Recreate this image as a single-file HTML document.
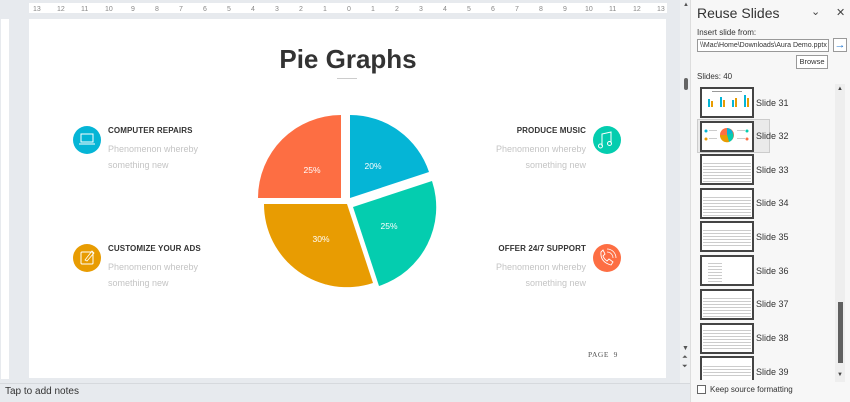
<!DOCTYPE html>
<html><head><meta charset="utf-8"><style>
*{margin:0;padding:0;box-sizing:border-box}
body{width:850px;height:402px;overflow:hidden;background:#e7eaee;font-family:"Liberation Sans",sans-serif;position:relative}
.abs{position:absolute}
.t{font-size:8px;font-weight:bold;color:#333;letter-spacing:.1px}
.d{font-size:9px;color:#c4c4c4;line-height:16px}
.th{position:absolute;left:700px;width:54px;height:31px;background:#fff;border:2px solid #444}
.tx{position:absolute;left:703px;width:48px;height:22px;background:repeating-linear-gradient(#fff 0,#fff 2px,#ccc 2px,#ccc 3px)}
.sl{position:absolute;left:756px;font-size:9px;color:#333}
</style></head><body>
<div class="abs" style="left:29px;top:3px;width:638px;height:10px;background:#fff"></div>
<svg width="638" height="10" style="position:absolute;left:29px;top:3px">
<g fill="#888" font-family="Liberation Sans" font-size="7">
<text x="4" y="8">13</text><text x="28" y="8">12</text><text x="52" y="8">11</text><text x="76" y="8">10</text><text x="102" y="8">9</text><text x="126" y="8">8</text><text x="150" y="8">7</text><text x="174" y="8">6</text><text x="198" y="8">5</text><text x="222" y="8">4</text><text x="246" y="8">3</text><text x="270" y="8">2</text><text x="294" y="8">1</text><text x="318" y="8">0</text><text x="342" y="8">1</text><text x="366" y="8">2</text><text x="390" y="8">3</text><text x="414" y="8">4</text><text x="438" y="8">5</text><text x="462" y="8">6</text><text x="486" y="8">7</text><text x="510" y="8">8</text><text x="534" y="8">9</text><text x="556" y="8">10</text><text x="580" y="8">11</text><text x="604" y="8">12</text><text x="628" y="8">13</text>
</g></svg>
<div class="abs" style="left:1px;top:19px;width:8px;height:360px;background:#fff"></div>
<div class="abs" style="left:29px;top:19px;width:637px;height:359px;background:#fff"></div>
<div class="abs" style="left:0;top:44px;width:696px;text-align:center;font-size:26px;font-weight:bold;color:#333">Pie Graphs</div>
<div class="abs" style="left:337px;top:78px;width:20px;height:1px;background:#ccc"></div>
<svg class="abs" style="left:0;top:0" width="680" height="380">
<path d="M341 198 L341 115 A83 83 0 0 0 258 198 Z" fill="#fd6e43"/>
<path d="M350 198 L350 115 A83 83 0 0 1 429 172 Z" fill="#05b5d6"/>
<path d="M353 207 L432 181 A83 83 0 0 1 379 286 Z" fill="#04cdaf"/>
<path d="M347 204 L373 283 A83 83 0 0 1 264 204 Z" fill="#e89c02"/>
<g fill="#fff" font-family="Liberation Sans" font-size="8.5" text-anchor="middle">
<text x="312" y="173">25%</text><text x="373" y="169">20%</text><text x="389" y="229">25%</text><text x="321" y="242">30%</text>
</g>
<circle cx="87" cy="140" r="14" fill="#05b5d6"/>
<rect x="81" y="134" width="12" height="8" fill="none" stroke="#fff" stroke-width="1"/><path d="M79 144 H95" stroke="#fff"/>
<circle cx="87" cy="258" r="14" fill="#e89c02"/>
<rect x="81" y="252" width="12" height="12" rx="1" fill="none" stroke="#fff"/><path d="M85 260 L92 251 L94 253 L87 261 Z" fill="none" stroke="#fff" stroke-width=".8"/>
<circle cx="607" cy="140" r="14" fill="#04cdaf"/>
<path d="M602 146 V134 L611 132 V143" fill="none" stroke="#fff"/><circle cx="600.5" cy="146" r="2" fill="none" stroke="#fff"/><circle cx="609.5" cy="143.5" r="2" fill="none" stroke="#fff"/>
<circle cx="607" cy="258" r="14" fill="#fd6e43"/>
<path d="M601 252 Q600 262 611 265 L613 262 L609 259 L607 261 Q604 259 603 256 L605 254 L603 250 Z" fill="none" stroke="#fff" stroke-width=".9"/>
<path d="M607 252 A6 6 0 0 1 613 258 M607 249 A9 9 0 0 1 616 258" fill="none" stroke="#fff" stroke-width=".8"/>
</svg>
<div class="abs t" style="left:108px;top:126px">COMPUTER REPAIRS</div>
<div class="abs d" style="left:108px;top:141px">Phenomenon whereby<br>something new</div>
<div class="abs t" style="left:108px;top:244px">CUSTOMIZE YOUR ADS</div>
<div class="abs d" style="left:108px;top:259px">Phenomenon whereby<br>something new</div>
<div class="abs t" style="right:264px;top:126px;text-align:right">PRODUCE MUSIC</div>
<div class="abs d" style="right:264px;top:141px;text-align:right">Phenomenon whereby<br>something new</div>
<div class="abs t" style="right:264px;top:244px;text-align:right">OFFER 24/7 SUPPORT</div>
<div class="abs d" style="right:264px;top:259px;text-align:right">Phenomenon whereby<br>something new</div>
<div class="abs" style="left:588px;top:350px;font-size:7.5px;color:#555;font-family:'Liberation Serif',serif;letter-spacing:.5px">PAGE &nbsp;9</div>
<div class="abs" style="left:680px;top:0;width:10px;height:383px;background:#eef0f2"></div>
<div class="abs" style="left:683px;top:2px;font-size:6px;color:#555">▲</div>
<div class="abs" style="left:684px;top:78px;width:4px;height:12px;background:#666;border-radius:2px"></div>
<div class="abs" style="left:682px;top:344px;font-size:7px;color:#555;line-height:9px">▼<br>⏶<br>⏷</div>
<div class="abs" style="left:0;top:383px;width:690px;height:19px;background:#e7eaee;border-top:1px solid #d6d9dd"></div>
<div class="abs" style="left:5px;top:386px;font-size:10px;color:#333">Tap to add notes</div>
<div class="abs" style="left:690px;top:0;width:160px;height:402px;background:#f7f7f7;border-left:1px solid #ddd"></div>
<div class="abs" style="left:697px;top:5px;font-size:14px;color:#333">Reuse Slides</div>
<div class="abs" style="left:811px;top:5px;font-size:11px;color:#444">⌄</div>
<div class="abs" style="left:836px;top:6px;font-size:11px;color:#444">✕</div>
<div class="abs" style="left:697px;top:28px;font-size:8px;color:#333">Insert slide from:</div>
<div class="abs" style="left:697px;top:39px;width:132px;height:13px;background:#fff;border:1px solid #999;font-size:7px;color:#333;padding:1px 2px;white-space:nowrap;overflow:hidden">\\Mac\Home\Downloads\Aura Demo.pptx &nbsp;▾</div>
<div class="abs" style="left:833px;top:38px;width:14px;height:14px;background:#fff;border:1px solid #999;color:#1a73d0;font-size:11px;line-height:12px;text-align:center;font-weight:bold">→</div>
<div class="abs" style="left:796px;top:55px;width:32px;height:14px;background:#fff;border:1px solid #999;font-size:7.5px;color:#333;text-align:center;line-height:12px">Browse</div>
<div class="abs" style="left:697px;top:72px;font-size:8px;color:#333">Slides: 40</div>
<div class="abs" style="left:697px;top:119px;width:73px;height:34px;background:#eaeaea;border:1px solid #ccc"></div>
<div class="th" style="top:87px"></div><div class="sl" style="top:98px">Slide 31</div>
<div class="th" style="top:121px"></div><div class="sl" style="top:131px">Slide 32</div>
<div class="th" style="top:154px"></div><div class="tx" style="top:161px"></div><div class="sl" style="top:165px">Slide 33</div>
<div class="th" style="top:188px"></div><div class="tx" style="top:195px"></div><div class="sl" style="top:198px">Slide 34</div>
<div class="th" style="top:221px"></div><div class="tx" style="top:228px;height:18px"></div><div class="sl" style="top:232px">Slide 35</div>
<div class="th" style="top:255px"></div><div class="tx" style="top:261px;width:14px;left:708px"></div><div class="sl" style="top:266px">Slide 36</div>
<div class="th" style="top:289px"></div><div class="tx" style="top:296px"></div><div class="sl" style="top:299px">Slide 37</div>
<div class="th" style="top:323px"></div><div class="tx" style="top:328px"></div><div class="sl" style="top:333px">Slide 38</div>
<div class="th" style="top:356px;height:24px;border-bottom:none"></div><div class="tx" style="top:364px;height:14px"></div><div class="sl" style="top:367px">Slide 39</div>
<svg class="abs" style="left:702px;top:89px" width="50" height="60">
<rect x="10" y="2" width="30" height="1" fill="#999"/>
<g fill="#05b5d6"><rect x="6" y="10" width="2" height="8"/><rect x="18" y="8" width="2" height="10"/><rect x="30" y="11" width="2" height="7"/><rect x="42" y="6" width="2" height="12"/></g>
<g fill="#e89c02"><rect x="9" y="12" width="2" height="6"/><rect x="21" y="11" width="2" height="7"/><rect x="33" y="9" width="2" height="9"/><rect x="45" y="9" width="2" height="9"/></g>
<circle cx="25" cy="46" r="7" fill="#fd6e43"/><path d="M25 46 V39 A7 7 0 0 1 31 44 Z" fill="#05b5d6"/><path d="M25 46 L31 44 A7 7 0 0 1 27 53 Z" fill="#04cdaf"/><path d="M25 46 L27 53 A7 7 0 0 1 18 46 Z" fill="#e89c02"/>
<circle cx="4" cy="42" r="1.5" fill="#05b5d6"/><circle cx="4" cy="50" r="1.5" fill="#e89c02"/><circle cx="45" cy="42" r="1.5" fill="#04cdaf"/><circle cx="45" cy="50" r="1.5" fill="#fd6e43"/>
<g fill="#ccc"><rect x="7" y="41" width="8" height="1"/><rect x="7" y="49" width="8" height="1"/><rect x="35" y="41" width="8" height="1"/><rect x="35" y="49" width="8" height="1"/></g>
</svg>
<div class="abs" style="left:835px;top:84px;width:10px;height:298px;background:#eee"></div>
<div class="abs" style="left:837px;top:86px;font-size:6px;color:#444">▲</div>
<div class="abs" style="left:838px;top:302px;width:5px;height:61px;background:#606060"></div>
<div class="abs" style="left:837px;top:372px;font-size:6px;color:#444">▼</div>
<div class="abs" style="left:697px;top:385px;width:9px;height:9px;border:1px solid #666;background:#fff"></div>
<div class="abs" style="left:710px;top:385px;font-size:8px;color:#333">Keep source formatting</div>
</body></html>
